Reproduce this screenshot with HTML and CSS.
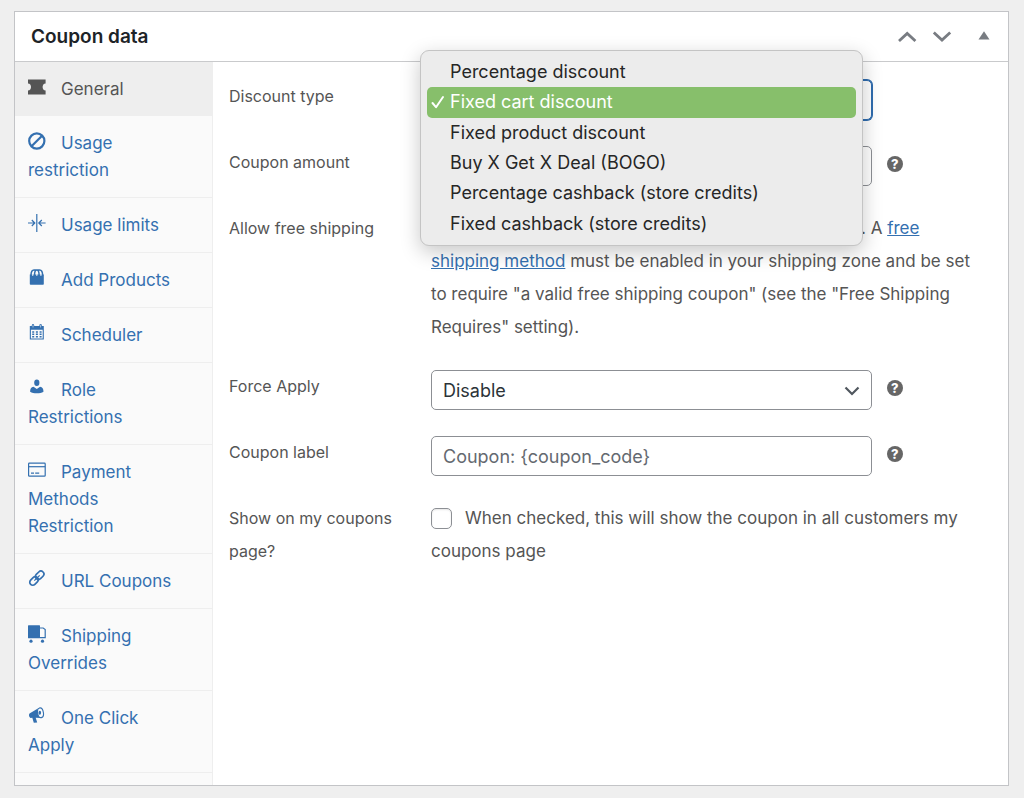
FILE: index.html
```html
<!DOCTYPE html>
<html lang="en">
<head>
<meta charset="utf-8">
<meta name="viewport" content="width=device-width, initial-scale=1">
<title>Coupon data</title>
<link rel="stylesheet" href="styles.css">
</head>
<body>
<section class="panel">
  <header class="panel-header">
    <h2 class="panel-title">Coupon data</h2>
    <div class="panel-actions">
      <button type="button" class="icon-button" aria-label="Move up"><svg width="20" height="20" viewBox="0 0 20 20"><path d="M2 14 10.200 6.500 18.400 14" fill="none" stroke="currentColor" stroke-width="2.800"/></svg></button>
      <button type="button" class="icon-button" aria-label="Move down"><svg width="20" height="20" viewBox="0 0 20 20"><path d="M1.800 5.500 10 13 18.200 5.500" fill="none" stroke="currentColor" stroke-width="2.800"/></svg></button>
      <button type="button" class="icon-button toggle" aria-label="Toggle panel"><svg width="20" height="20" viewBox="0 0 20 20"><path d="M4.500 12.500 10 4.200l5.500 8.300z" fill="currentColor"/></svg></button>
    </div>
  </header>
  <div class="panel-body">
    <nav class="tabs" aria-label="Coupon sections">
      <a class="tab active" href="#general"><svg class="tab-icon" viewBox="0 0 18 18"><path fill="currentColor" d="M0 1.500h17.600v4c-2 .2-3 1.600-3 3.500s1 3.300 3 3.500v4H0v-4c2-.2 3-1.600 3-3.500S2 5.700 0 5.500z"/></svg>General</a>
      <a class="tab" href="#usage-restriction"><svg class="tab-icon" viewBox="0 0 18 18"><g fill="none" stroke="currentColor" stroke-width="2.200"><circle cx="8.800" cy="9" r="7.600"/><path d="M3.500 14.300 14.100 3.700"/></g></svg>Usage restriction</a>
      <a class="tab" href="#usage-limits"><svg class="tab-icon" viewBox="0 0 18 18"><g fill="none" stroke="currentColor" stroke-width="1.200"><path d="M8.800 0v18M0 9h6.500M3.800 6 6.800 9l-3 3M17.600 9h-6.500M13.800 6l-3 3 3 3"/></g></svg>Usage limits</a>
      <a class="tab" href="#add-products"><svg class="tab-icon" viewBox="0 0 18 18"><path fill="currentColor" d="M1.800 5.500h14V15q0 .8-.8.8H2.600q-.8 0-.8-.8z"/><path d="M3 6.500C3 3 4 1 6 1h5.600c2 0 3 2 3 5.500M6.500 6.500c0-3 .5-5.500 2.300-5.500s2.300 2.500 2.300 5.500" fill="none" stroke="currentColor" stroke-width="1.500"/><path d="M4.700 5.200v1.500M8.800 5.200v1.500M12.900 5.200v1.500" stroke="#fafafa" stroke-width="1.200"/></svg>Add Products</a>
      <a class="tab" href="#scheduler"><svg class="tab-icon" viewBox="0 0 18 18"><path fill="currentColor" fill-rule="evenodd" d="M1.800 2h2V1.200a1.200 1.200 0 0 1 2.400 0V2h5.200v-.8a1.200 1.200 0 0 1 2.400 0V2h2v13.600h-14zM2.900 5.700v8.900h11.800V5.700z"/><path d="M4.200 8h9.500M4.200 10.300h9.500M4.200 12.700h9.500" stroke="currentColor" stroke-width="1.500" stroke-dasharray="2 1.700"/><path d="M5 .8v2.700M12.600.8v2.700" stroke="#fafafa" stroke-width=".6"/></svg>Scheduler</a>
      <a class="tab" href="#role-restrictions"><svg class="tab-icon" viewBox="0 0 18 18"><g fill="currentColor"><ellipse cx="8.800" cy="3.800" rx="2.600" ry="3.200"/><path d="M5.500 7.700 8.800 10l3.300-2.300c2.400.3 3.400 1.700 3.400 5.100-1.800 1.100-4 1.500-6.700 1.500s-4.900-.4-6.700-1.500c0-3.400 1-4.800 3.400-5.100z"/></g></svg>Role Restrictions</a>
      <a class="tab" href="#payment-methods"><svg class="tab-icon" viewBox="0 0 18 18"><g fill="none" stroke="currentColor"><rect x=".6" y="2.200" width="16.600" height="13" rx=".8" stroke-width="1.200"/><path d="M.6 5.700h16.600" stroke-width="1.200"/><path d="M3 12.100h3M7.200 12.100h4" stroke-width="1.200"/></g></svg>Payment Methods Restriction</a>
      <a class="tab" href="#url-coupons"><svg class="tab-icon" viewBox="0 0 18 18"><g fill="none" stroke="currentColor" stroke-width="1.700" transform="rotate(-45 9 8)"><rect x="0" y="5" width="9.500" height="6" rx="3"/><rect x="8" y="5" width="9.500" height="6" rx="3"/></g><path d="M6.300 10.700 11.700 5.300" stroke="currentColor" stroke-width="1.200"/></svg>URL Coupons</a>
      <a class="tab" href="#shipping-overrides"><svg class="tab-icon" viewBox="0 0 18 18"><g fill="currentColor"><rect y=".3" width="12" height="13" rx=".6"/><circle cx="3" cy="16.200" r="1.600"/><circle cx="14.500" cy="16.200" r="1.600"/></g><path d="M12 3h3.200l2 1.500v8.200H12" fill="none" stroke="currentColor" stroke-width="1.200"/></svg>Shipping Overrides</a>
      <a class="tab" href="#one-click-apply"><svg class="tab-icon" viewBox="0 0 18 18"><path fill="currentColor" d="M1.500 6.500 11.500.5l2 10.500-5.800-.3 1.500 4.800-3.400.3-1.500-5-1.800.2C.8 9.800.6 7.600 1.500 6.500z"/><ellipse cx="12.500" cy="5.800" rx="2.900" ry="4.900" fill="#fafafa" stroke="currentColor" stroke-width="1.100" transform="rotate(-10 12.500 5.800)"/><ellipse cx="11.800" cy="5.800" rx="1.300" ry="2" fill="currentColor"/></svg>One Click Apply</a>
    </nav>
    <form class="fields">
      <div class="field">
        <label class="field-label" for="discount-type">Discount type</label>
        <div class="field-main">
          <div class="picker">
            <select class="control focused" id="discount-type">
              <option>Percentage discount</option>
              <option selected>Fixed cart discount</option>
              <option>Fixed product discount</option>
              <option>Buy X Get X Deal (BOGO)</option>
              <option>Percentage cashback (store credits)</option>
              <option>Fixed cashback (store credits)</option>
            </select>
            <ul class="menu" role="listbox" aria-label="Discount type">
              <li class="menu-item" role="option">Percentage discount</li>
              <li class="menu-item selected" role="option" aria-selected="true"><svg class="check" width="14" height="14" viewBox="0 0 14 14"><path d="M1.500 8 5 12.200 12 2" fill="none" stroke="currentColor" stroke-width="2" stroke-linecap="round" stroke-linejoin="round"/></svg>Fixed cart discount</li>
              <li class="menu-item" role="option">Fixed product discount</li>
              <li class="menu-item" role="option">Buy X Get X Deal (BOGO)</li>
              <li class="menu-item" role="option">Percentage cashback (store credits)</li>
              <li class="menu-item" role="option">Fixed cashback (store credits)</li>
            </ul>
          </div>
        </div>
      </div>
      <div class="field">
        <label class="field-label" for="coupon-amount">Coupon amount</label>
        <div class="field-main">
          <input class="control" id="coupon-amount" type="text">
          <button type="button" class="help" aria-label="Help: coupon amount">?</button>
        </div>
      </div>
      <div class="field">
        <label class="field-label" for="free-shipping">Allow free shipping</label>
        <p class="description"><input class="checkbox" type="checkbox" id="free-shipping">Check this box if the coupon grants free shipping. A <a class="link" href="#free-shipping-method">free shipping method</a> must be enabled in your shipping zone and be set to require "a valid free shipping coupon" (see the "Free Shipping Requires" setting).</p>
      </div>
      <div class="field">
        <label class="field-label" for="force-apply">Force Apply</label>
        <div class="field-main">
          <div class="picker">
            <select class="control" id="force-apply"><option>Disable</option><option>Enable</option></select>
            <svg class="chevron" width="16" height="10" viewBox="0 0 16 10"><path d="M1.500 1.500 8 8l6.500-6.500" fill="none" stroke="currentColor" stroke-width="2.200"/></svg>
          </div>
          <button type="button" class="help" aria-label="Help: force apply">?</button>
        </div>
      </div>
      <div class="field">
        <label class="field-label" for="coupon-label">Coupon label</label>
        <div class="field-main">
          <input class="control" id="coupon-label" type="text" placeholder="Coupon: {coupon_code}">
          <button type="button" class="help" aria-label="Help: coupon label">?</button>
        </div>
      </div>
      <div class="field">
        <label class="field-label" for="show-coupons">Show on my coupons page?</label>
        <p class="description"><input class="checkbox" type="checkbox" id="show-coupons">When checked, this will show the coupon in all customers my coupons page</p>
      </div>
    </form>
  </div>
</section>
</body>
</html>
```

FILE: styles.css
```css
* {
  box-sizing: border-box;
}

body {
  margin: 0;
  min-height: 100vh;
  padding: 11px 15px 12px 14px;
  display: flex;
  background: #efefef;
  color: #555;
  font-family: Inter, "Liberation Sans", sans-serif;
  font-size: 16px;
}

button {
  margin: 0;
  padding: 0;
  border: 0;
  background: none;
  font: inherit;
}

.panel {
  flex: 1;
  display: flex;
  flex-direction: column;
  background: #fff;
  border: 1px solid #c3c4c7;
}

.panel-header {
  display: flex;
  align-items: center;
  justify-content: space-between;
  height: 50px;
  padding: 0 14px 0 16px;
  border-bottom: 1px solid #c9cacc;
}

.panel-title {
  margin: 0;
  color: #1d2327;
  font-size: 19px;
  font-weight: 600;
}

.panel-actions {
  display: flex;
  gap: 15px;
  color: #787c82;
}

.icon-button {
  display: flex;
  color: inherit;
}

.toggle {
  margin-left: 7px;
}

.panel-body {
  flex: 1;
  display: flex;
}

.tabs {
  flex: 0 0 198px;
  background: #fafafa;
  border-right: 1px solid #eee;
}

.tab {
  display: block;
  padding: 14px 36px 13px 13px;
  border-bottom: 1px solid #eee;
  color: #3470b0;
  font-size: 17px;
  line-height: 27px;
  text-decoration: none;
}

.tab.active {
  padding-bottom: 12px;
  background: #eee;
  color: #555;
}

.tab-icon {
  width: 18px;
  height: 18px;
  margin-right: 15px;
  vertical-align: -1px;
}

.fields {
  flex: 1;
  display: grid;
  align-content: start;
  gap: 26px;
  min-width: 0;
  padding: 18px 26px 26px 16px;
}

.field {
  display: grid;
  grid-template-columns: 166px 1fr;
  column-gap: 36px;
  line-height: 33px;
}

.field-main {
  display: flex;
  align-items: center;
  gap: 15px;
}

.picker {
  position: relative;
  flex: 0 0 80%;
}

.control {
  appearance: none;
  display: block;
  width: 100%;
  height: 40px;
  padding: 0 11px;
  background: #fff;
  border: 1px solid #8c8f94;
  border-radius: 5px;
  color: #2c3338;
  font-family: inherit;
  font-size: 18px;
}

.field-main > .control {
  width: 80%;
}

.control::placeholder {
  color: #646970;
  opacity: 1;
}

.control.focused {
  border-color: #2f6cae;
  box-shadow: 0 0 0 1px #2f6cae;
}

.chevron {
  position: absolute;
  right: 12px;
  top: 16px;
  color: #50575e;
  pointer-events: none;
}

.help {
  width: 16px;
  height: 16px;
  margin-bottom: 4px;
  border-radius: 50%;
  background: #666;
  color: #fff;
  font-size: 13px;
  font-weight: 800;
  line-height: 16px;
  text-align: center;
}

.description {
  margin: 0;
  font-size: 17px;
}

.checkbox {
  appearance: none;
  width: 21px;
  height: 21px;
  margin: 0 13px 0 0;
  background: #fff;
  border: 1px solid #8c8f94;
  border-radius: 5px;
  box-shadow: inset 0 1px 2px rgba(0, 0, 0, 0.1);
  vertical-align: -5px;
}

.link {
  color: #3470b0;
}

.menu {
  position: absolute;
  z-index: 1;
  top: -30px;
  left: -11px;
  width: calc(100% + 2px);
  height: 196px;
  display: grid;
  grid-auto-rows: 1fr;
  margin: 0;
  padding: 6px 6px 6px;
  background: #ececec;
  border: 1px solid #c4c4c4;
  border-radius: 9px;
  box-shadow: 0 6px 20px rgba(0, 0, 0, 0.22);
  color: #262626;
  font-size: 18px;
  list-style: none;
}

.menu-item {
  position: relative;
  display: flex;
  align-items: center;
  padding-left: 23px;
  border-radius: 5px;
  line-height: 24px;
}

.menu-item.selected {
  background: #87bf6b;
  color: #fff;
}

.check {
  position: absolute;
  left: 4px;
}
```
